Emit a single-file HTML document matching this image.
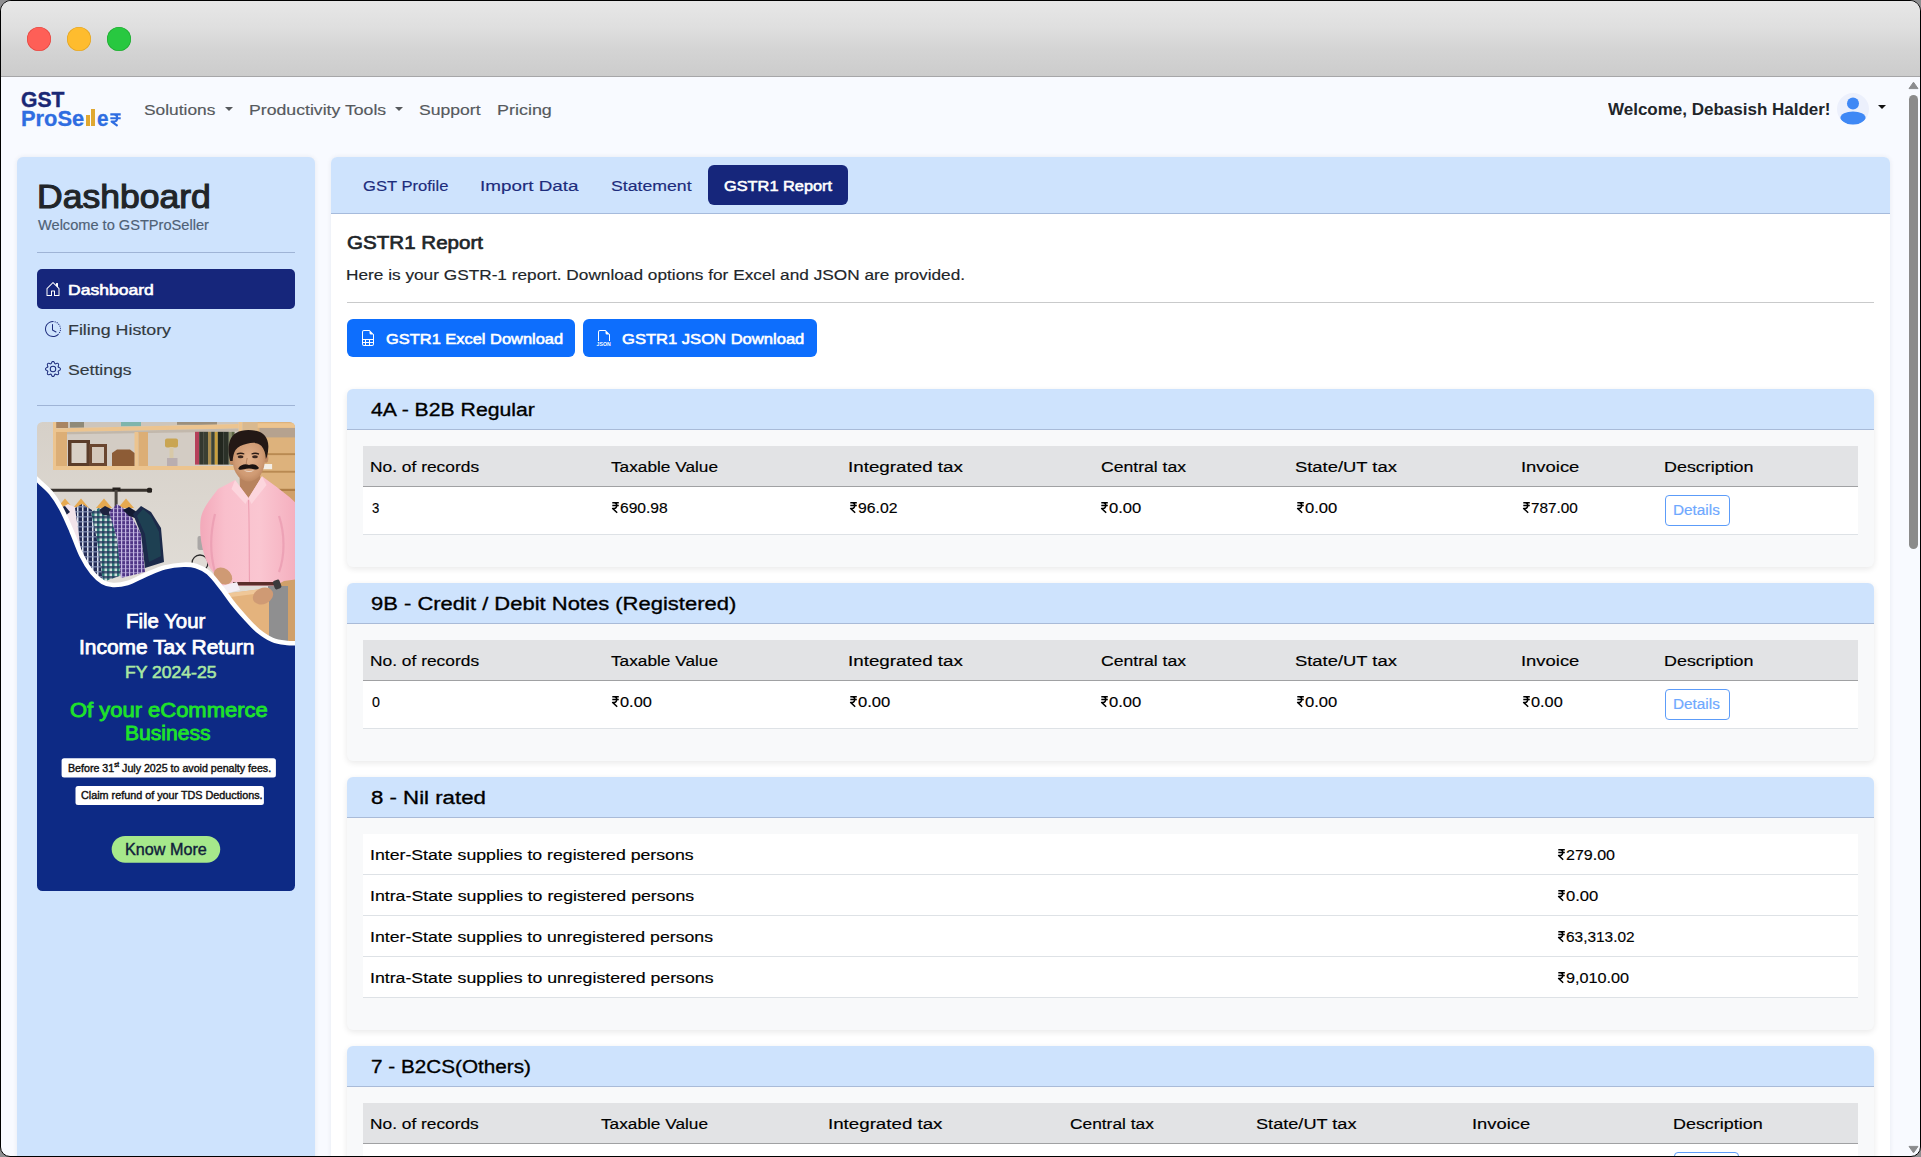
<!DOCTYPE html><html lang="en"><head><meta charset="utf-8"><title>GSTProSeller - GSTR1 Report</title><style>
*{box-sizing:border-box;margin:0;padding:0}
html,body{width:1921px;height:1157px;overflow:hidden;background:#8e8e90;font-family:"Liberation Sans",sans-serif}
#win{position:absolute;left:0;top:0;width:1921px;height:1157px;border:1px solid #000;border-radius:11px 11px 10px 10px;overflow:hidden;background:#f8faff}
#abs{position:absolute;left:-1px;top:-1px;width:1921px;height:1157px}
#abs>*,#abs .a{position:absolute}
.t{position:absolute;white-space:nowrap;line-height:1;transform-origin:0 0;display:block}
.t sup{font-size:60%;vertical-align:top;position:relative;top:-1px;letter-spacing:0}
.rs{position:absolute;overflow:visible}
#title{left:1px;top:1px;width:1919px;height:75px;background:linear-gradient(#e7e7e7,#dfdfdf 35%,#d4d4d4 65%,#cccccc)}
#tline{left:1px;top:76px;width:1919px;height:1px;background:#a6a6a8}
.dot{width:24px;height:24px;border-radius:50%;top:27px}
#side{left:17px;top:157px;width:298px;height:1010px;background:#cee3fd;border-radius:6px;box-shadow:0 0 5px rgba(30,40,80,.08)}
#main{left:331px;top:157px;width:1559px;height:1010px;background:#fff;border-radius:6px;box-shadow:0 0 5px rgba(30,40,80,.08)}
#tabs{left:331px;top:157px;width:1559px;height:56px;background:#cee3fd;border-radius:6px 6px 0 0}
#tabline{left:331px;top:213px;width:1559px;height:1px;background:#a6bbdc}
.hr{height:1px}
.navact{background:#16267b;border-radius:5px}
.btn{background:#0d6efd;border-radius:6px;height:38px;top:319px}
.sec{left:347px;width:1527px;background:#f8f9fa;border-radius:6px;box-shadow:0 2px 6px rgba(0,0,0,.09)}
.sech{left:347px;width:1527px;height:40px;background:#cee3fd;border-radius:6px 6px 0 0}
.secl{left:347px;width:1527px;height:1px;background:#a9bbd8}
.th{left:363px;width:1495px;height:40px;background:#e2e3e5}
.thl{left:363px;width:1495px;height:1px;background:#a0a1a3}
.tr{left:363px;width:1495px;background:#fff}
.trl{left:363px;width:1495px;height:1px;background:#dee2e6}
.det{width:65px;height:31px;border:1px solid #5c9cf9;border-radius:4px;background:#fff}
.caret{position:absolute;width:0;height:0;border-left:4.4px solid transparent;border-right:4.4px solid transparent;border-top:4.6px solid #56595d}
.ad{position:absolute}
svg.ic{position:absolute;overflow:visible}
</style></head><body>
<div id="win"><div id="abs">
<div id="title"></div><div id="tline"></div>
<div class="dot" style="left:27px;background:#fe5f57;box-shadow:inset 0 0 0 .6px #e0443e"></div>
<div class="dot" style="left:67px;background:#febc2e;box-shadow:inset 0 0 0 .6px #dea123"></div>
<div class="dot" style="left:107px;background:#28c840;box-shadow:inset 0 0 0 .6px #1fa62f"></div>
<nav>
<div class="a" style="left:85.9px;top:115.3px;width:4px;height:10.4px;background:#e0a832"></div>
<div class="a" style="left:91.2px;top:109.2px;width:4.1px;height:16.5px;background:#e0a832"></div>
<svg class="ic" style="left:110.4px;top:113.4px;width:11px;height:13.6px" viewBox="0 0 11 13.6"><path d="M0.3 1.4H10.7M0.3 5.2H10.7M0.5 1.4H3.6C8.4 1.4 8.4 8.6 3.6 8.6H1.6L7.6 12.8" fill="none" stroke="#2f6de1" stroke-width="2.1" stroke-linejoin="round"/></svg>
<div class="caret" style="left:224.8px;top:107px"></div>
<div class="caret" style="left:394.9px;top:107px"></div>
<svg class="ic" style="left:1837px;top:93px;width:32px;height:32px" viewBox="0 0 32 32"><defs><clipPath id="avc"><circle cx="16" cy="16" r="16"/></clipPath></defs><circle cx="16" cy="16" r="16" fill="#ecf0fc"/><g clip-path="url(#avc)" fill="#3f88f5"><circle cx="16" cy="10.6" r="6"/><ellipse cx="16" cy="25" rx="12.6" ry="6.6"/></g></svg>
<div class="caret" style="left:1877.6px;top:105px;border-top-color:#111"></div>
</nav>
<svg class="ic" style="left:1906px;top:78px;width:14px;height:1078px" viewBox="0 0 14 1078"><path d="M7.5 4.2 L12 10.6 H3 Z" fill="#8b8c8e" stroke="#8b8c8e" stroke-width="1" stroke-linejoin="round"/><rect x="3" y="17" width="9" height="454" rx="4.5" fill="#8b8b8b"/><path d="M7.5 1074.8 L12 1068.4 H3 Z" fill="#8b8c8e" stroke="#8b8c8e" stroke-width="1" stroke-linejoin="round"/></svg>
<aside id="side"></aside>
<div class="hr" style="left:37px;top:252px;width:258px;background:#9fb4d6"></div>
<div class="navact" style="left:37px;top:269px;width:258px;height:40px"></div>
<div class="hr" style="left:37px;top:405px;width:258px;background:#9fb4d6"></div>
<svg class="ic" style="left:45px;top:281.2px;width:16px;height:16px" viewBox="0 0 16 16" fill="#fff"><path d="M8.354 1.146a.5.5 0 0 0-.708 0l-6 6A.5.5 0 0 0 1.5 7.5v7a.5.5 0 0 0 .5.5h4.5a.5.5 0 0 0 .5-.5v-4h2v4a.5.5 0 0 0 .5.5H14a.5.5 0 0 0 .5-.5v-7a.5.5 0 0 0-.146-.354L13 5.793V2.5a.5.5 0 0 0-.5-.5h-1a.5.5 0 0 0-.5.5v1.293zM2.5 14V7.707l5.5-5.5 5.5 5.5V14H10v-4a.5.5 0 0 0-.5-.5h-3a.5.5 0 0 0-.5.5v4z"/></svg>
<svg class="ic" style="left:45px;top:321px;width:16px;height:16px" viewBox="0 0 16 16" fill="#1d2c7c"><path d="M8.515 1.019A7 7 0 0 0 8 1V0a8 8 0 0 1 .589.022zm2.004.45a7 7 0 0 0-.985-.299l.219-.976q.576.129 1.126.342zm1.37.71a7 7 0 0 0-.439-.27l.493-.87a8 8 0 0 1 .979.654l-.615.789a7 7 0 0 0-.418-.302zm1.834 1.79a7 7 0 0 0-.653-.796l.724-.69q.406.429.747.91zm.744 1.352a7 7 0 0 0-.214-.468l.893-.45a8 8 0 0 1 .45 1.088l-.95.313a7 7 0 0 0-.179-.483m.53 2.507a7 7 0 0 0-.1-1.025l.985-.17q.1.58.116 1.17zm-.131 1.538q.05-.254.081-.51l.993.123a8 8 0 0 1-.23 1.155l-.964-.267q.069-.247.12-.501m-.952 2.379q.276-.436.486-.908l.914.405q-.24.54-.555 1.038zm-.964 1.205q.183-.183.35-.378l.758.653a8 8 0 0 1-.401.432z"/><path d="M8 1a7 7 0 1 0 4.95 11.95l.707.707A8.001 8.001 0 1 1 8 0z"/><path d="M7.5 3a.5.5 0 0 1 .5.5v5.21l3.248 1.856a.5.5 0 0 1-.496.868l-3.5-2A.5.5 0 0 1 7 9V3.500a.5.5 0 0 1 .5-.5"/></svg>
<svg class="ic" style="left:45px;top:361px;width:16px;height:16px" viewBox="0 0 16 16" fill="#1d2c7c"><path d="M8 4.754a3.246 3.246 0 1 0 0 6.492 3.246 3.246 0 0 0 0-6.492M5.754 8a2.246 2.246 0 1 1 4.492 0 2.246 2.246 0 0 1-4.492 0"/><path d="M9.796 1.343c-.527-1.79-3.065-1.79-3.592 0l-.094.319a.873.873 0 0 1-1.255.52l-.292-.16c-1.64-.892-3.433.902-2.54 2.541l.159.292a.873.873 0 0 1-.52 1.255l-.319.094c-1.79.527-1.79 3.065 0 3.592l.319.094a.873.873 0 0 1 .52 1.255l-.16.292c-.892 1.64.901 3.434 2.541 2.54l.292-.159a.873.873 0 0 1 1.255.52l.094.319c.527 1.79 3.065 1.79 3.592 0l.094-.319a.873.873 0 0 1 1.255-.52l.292.16c1.64.893 3.434-.902 2.54-2.541l-.159-.292a.873.873 0 0 1 .52-1.255l.319-.094c1.79-.527 1.79-3.065 0-3.592l-.319-.094a.873.873 0 0 1-.52-1.255l.16-.292c.893-1.64-.902-3.433-2.541-2.54l-.292.159a.873.873 0 0 1-1.255-.52zm-2.633.283c.246-.835 1.428-.835 1.674 0l.094.319a1.873 1.873 0 0 0 2.693 1.115l.291-.16c.764-.415 1.6.42 1.184 1.185l-.159.292a1.873 1.873 0 0 0 1.116 2.692l.318.094c.835.246.835 1.428 0 1.674l-.319.094a1.873 1.873 0 0 0-1.115 2.693l.16.291c.415.764-.42 1.6-1.185 1.184l-.291-.159a1.873 1.873 0 0 0-2.693 1.116l-.094.318c-.246.835-1.428.835-1.674 0l-.094-.319a1.873 1.873 0 0 0-2.692-1.115l-.292.16c-.764.415-1.6-.42-1.184-1.185l.159-.291A1.873 1.873 0 0 0 1.945 8.93l-.319-.094c-.835-.246-.835-1.428 0-1.674l.319-.094A1.873 1.873 0 0 0 3.06 4.377l-.16-.292c-.415-.764.42-1.6 1.185-1.184l.292.159a1.873 1.873 0 0 0 2.692-1.115z"/></svg>
<svg class="ad" width="258" height="469" viewBox="0 0 258 469" style="left:37px;top:422px">
<defs><clipPath id="adc"><rect width="258" height="469" rx="5.5"/></clipPath><linearGradient id="wall" x1="0" y1="0" x2="0" y2="1"><stop offset="0" stop-color="#d6d0c8"/><stop offset="1" stop-color="#e6e3de"/></linearGradient><pattern id="plaid" width="5" height="5" patternUnits="userSpaceOnUse"><rect width="5" height="5" fill="#232c55"/><rect width="1.5" height="5" fill="#dfe4ee"/><rect y="0" width="5" height="1.5" fill="#8f9cc0" opacity=".7"/></pattern><pattern id="plaid2" width="4" height="4" patternUnits="userSpaceOnUse"><rect width="4" height="4" fill="#4f3586"/><rect width="1.2" height="4" fill="#c3b6e2"/><rect width="4" height="1.2" fill="#c3b6e2" opacity=".55"/></pattern><pattern id="plaid3" width="5" height="5" patternUnits="userSpaceOnUse"><rect width="5" height="5" fill="#cfe0dc"/><rect width="2.5" height="5" fill="#2f7a78"/><rect width="5" height="2.5" fill="#24335a" opacity=".75"/></pattern></defs>
<g clip-path="url(#adc)">
<rect width="258" height="240" fill="url(#wall)"/>
<path d="M19 0 H201.6 V2 L19 6.5Z" fill="#cdc5bb"/>
<rect x="19" y="0" width="12" height="6" fill="#a98562"/><rect x="33" y="0" width="14" height="5.6" fill="#8f8a78"/><rect x="84" y="0" width="20" height="4.2" fill="#7fb5ac"/><rect x="140" y="0" width="40" height="2.8" fill="#9c8f7c"/>
<rect x="19" y="10" width="180" height="34" fill="#d3ccc4"/>
<rect x="16" y="0" width="3.2" height="48" fill="#ecc48f"/>
<path d="M16 6.5 L201.6 2 V6.6 L16 10.3Z" fill="#ecc48f"/>
<path d="M19 10.3 L201.6 6.6 V9.6 L19 12.4Z" fill="#b9ae9f" opacity=".7"/>
<rect x="16" y="44" width="182" height="4" fill="#ecc48f"/>
<rect x="97.5" y="10" width="4" height="34" fill="#ecc48f"/><rect x="101.5" y="10" width="9.5" height="34" fill="#dcae76"/>
<rect x="19" y="10" width="11" height="34" fill="#dcae76"/>
<rect x="31" y="18" width="22" height="26" fill="#5b3c29"/><rect x="34.5" y="21" width="15" height="20" fill="#d9d0c6"/>
<rect x="52" y="22" width="18" height="22" fill="#6a4630"/><rect x="55" y="25" width="12" height="16" fill="#d4c8bb"/>
<path d="M75 31 L80 27.5 H93 L97.5 31 V44 H75Z" fill="#8d5c36"/>
<rect x="128" y="16.5" width="13" height="9" rx="2" fill="#c9a553"/><rect x="132.5" y="25" width="4" height="12" fill="#d8c9a8"/><rect x="130" y="36" width="10.5" height="8" fill="#b9aeb0"/>
<rect x="158.0" y="9.8" width="4.2" height="32.8" fill="#b5405a"/>
<rect x="162.2" y="9.8" width="4.6" height="32.8" fill="#33382f"/>
<rect x="166.8" y="9.8" width="4.2" height="32.8" fill="#3a3f33"/>
<rect x="171.0" y="9.8" width="3.2" height="32.8" fill="#a98d50"/>
<rect x="174.2" y="9.8" width="3.6" height="32.8" fill="#3d4437"/>
<rect x="177.8" y="9.8" width="3" height="32.8" fill="#c9a03c"/>
<rect x="180.8" y="9.8" width="5.4" height="32.8" fill="#22271f"/>
<rect x="186.2" y="9.8" width="5.6" height="32.8" fill="#2b3128"/>
<rect x="191.8" y="9.8" width="2.6" height="32.8" fill="#8a8f6a"/>
<rect x="194.4" y="9.8" width="3.2" height="32.8" fill="#5c6544"/>
<rect x="201.6" y="0" width="3.8" height="12" fill="#ecc48f"/><rect x="205.4" y="0" width="15.5" height="13" fill="#d9b98f"/>
<rect x="220.6" y="0" width="40" height="80" fill="#ddb27c"/>
<rect x="220.6" y="1.2" width="40" height="4.6" fill="#ecc48f"/><rect x="222.5" y="6" width="37" height="9.4" fill="#b5a28f"/>
<rect x="220.6" y="31.2" width="40" height="1.9" fill="#b98a52"/><rect x="220.6" y="48.8" width="40" height="1.9" fill="#b98a52"/><rect x="220.6" y="66.8" width="40" height="2.2" fill="#b07f47"/>
<rect x="225.6" y="42" width="9.5" height="5.2" fill="#f3eee6"/>
<rect x="240" y="69" width="21" height="160" fill="#d0a06a"/>
<rect x="128" y="146" width="40" height="10" fill="#d9b88e"/>
<rect x="160.5" y="114" width="7" height="14" rx="2" fill="#aaa7a6"/><circle cx="163" cy="141" r="8" fill="none" stroke="#2a2a2a" stroke-width="1.3"/>
<rect x="12.5" y="66.8" width="101.5" height="2.9" rx="1" fill="#3a342f"/><rect x="110" y="65.8" width="5" height="5" rx="1.5" fill="#26221f"/>
<rect x="75.5" y="65.5" width="8" height="3.6" fill="#26221f"/><rect x="77.6" y="68" width="3" height="80" fill="#4a4540"/>
<g transform="translate(0,-6)">
<path d="M20 92 L28 82.6 L36 92Z" fill="#e6a950"/>
<path d="M36 92 L44 82.6 L52 92Z" fill="#e6a950"/>
<path d="M59 92 L67 82.6 L75 92Z" fill="#e6a950"/>
<path d="M81 92 L89 82.6 L97 92Z" fill="#e6a950"/>
<path d="M24 92 L31 88 L42 93 L52 118 L58 160 L30 170 L20 120Z" fill="#f1e3ea"/>
<path d="M22 92 L28 90 L33 96 L28 100 L22 98Z" fill="#1b2447"/>
<path d="M38 92 L45 88 L55 94 L66 118 L72 160 L48 168 L42 120Z" fill="url(#plaid)"/>
<path d="M54 96 L62 92 L74 100 L84 124 L88 158 L66 166 L60 124Z" fill="url(#plaid3)"/>
<path d="M62 94 L68 90 L78 95 L74 100 L66 99Z" fill="#1d2340"/>
<path d="M72 96 L80 88 L92 96 L104 118 L108 156 L84 162 L80 122Z" fill="url(#plaid2)"/>
<path d="M86 94 L92 91 L100 96 L104 104 L92 100Z" fill="#141a33"/>
<path d="M96 98 L104 90 L114 96 L124 112 L127 146 L108 152 L104 118Z" fill="#1c2a4a"/>
<path d="M100 100 L106 93 L114 100 L122 116 L124 140 L112 146 L108 118Z" fill="#1f4a55" opacity=".7"/>
</g>
<defs><linearGradient id="shirt" x1="0" y1="0" x2="1" y2="0"><stop offset="0" stop-color="#f3a9ba"/><stop offset=".25" stop-color="#f9bfcc"/><stop offset=".6" stop-color="#fac6d1"/><stop offset="1" stop-color="#f4adbd"/></linearGradient><radialGradient id="face" cx=".5" cy=".45" r=".6"><stop offset="0" stop-color="#e2b18b"/><stop offset=".7" stop-color="#cf9a73"/><stop offset="1" stop-color="#b9835d"/></radialGradient></defs>
<path d="M202.5 52 L223.3 50 L222.5 70 L211.5 78 L203 68Z" fill="#b8835e"/>
<path d="M163.4 100 C164 90 168 84 181 67 L198 58 L211.5 76 L225 54.3 L239.7 65 L252.4 75 L262 84 V157 L247 159 L238 164 L182 164 L176 150 C168 140 162 120 163.4 100Z" fill="url(#shirt)"/>
<path d="M198 58 L194.5 67 L208.5 82 L211.5 76Z" fill="#fcd5dd"/><path d="M225 54.3 L229.5 63 L214.5 82 L211.5 76Z" fill="#fcd5dd"/>
<path d="M211.5 78 C212.5 100 212 130 212.5 162" stroke="#ec9fb2" stroke-width="1.1" fill="none"/>
<path d="M178 92 C173 112 173 132 178 150" stroke="#ea9bb0" stroke-width="2.2" fill="none" opacity=".75"/>
<path d="M242 94 C248 112 248 134 242 150" stroke="#ea9bb0" stroke-width="2.2" fill="none" opacity=".75"/>
<ellipse cx="194.8" cy="38.5" rx="2.3" ry="4.2" fill="#c08a63"/><ellipse cx="229" cy="36.5" rx="2.3" ry="4.2" fill="#c08a63"/>
<path d="M195.7 34 C195 44 198 52 203 56 C207 59 210 59.6 212.5 59.6 C216 59.4 220 57 223.5 53 C227 48 228.5 40 227.9 32 C227 22 220 17 212 17 C203 17 196.5 24 195.7 34Z" fill="url(#face)"/>
<path d="M193.2 39 C190.3 28 190.8 16 199 11 C205 7.4 213 7.6 219 8.8 C227 10.4 232.4 17 231.2 27 C231 31 230.2 34.5 228.9 37 C228.6 31 227 27 224.5 24 C221 20.5 216 20.2 210 21.8 C205 23.2 201 24.6 198.5 28 C196.5 31 196 35 195.6 39 Z" fill="#231815"/>
<path d="M199.6 31.6 Q203.5 29.6 207.4 31.4 L207.2 32.6 Q203.5 31.2 199.9 32.8Z" fill="#2a1b15"/><path d="M214.4 31.4 Q218.4 29.6 222.2 31.6 L221.9 32.8 Q218.4 31.2 214.6 32.6Z" fill="#2a1b15"/>
<ellipse cx="203.6" cy="34.8" rx="2.9" ry="1.5" fill="#3a261e"/><ellipse cx="218" cy="34.8" rx="2.9" ry="1.5" fill="#3a261e"/>
<path d="M210.2 36 C209.6 39 209 41 209.4 42" stroke="#b07d58" stroke-width=".9" fill="none"/>
<path d="M201.4 46.3 C204 42 209 41.8 212 43 C215 41.8 219.6 42 221.7 45.6 C222.2 47.2 220 47.8 217 47.2 C214 46.4 210 46.4 207 47.2 C204 48 201.2 47.8 201.4 46.3Z" fill="#1c1310"/>
<path d="M206.5 48.2 Q212 51.4 217.5 48.2 Q212 49.6 206.5 48.2Z" fill="#f3e9e2"/>
<rect x="196" y="160" width="42" height="3.5" fill="#5a2e2a"/>
<rect x="231" y="164" width="20" height="60" fill="#8f8f90"/>
<path d="M186 172 L232 166 V224 H186Z" fill="#e4b37d"/>
<path d="M186 172 L232 166 L232 170 L186 176Z" fill="#efc798"/>
<path d="M184 164 L200 160 L203 168 L187 172Z" fill="#f4eef5"/>
<ellipse cx="186" cy="154" rx="10" ry="7.5" transform="rotate(35 186 154)" fill="#cf9a74"/>
<ellipse cx="226" cy="174" rx="10.5" ry="8" transform="rotate(-25 226 174)" fill="#cf9a74"/>
<rect x="236.5" y="158" width="7" height="9" rx="2" transform="rotate(-20 240 162)" fill="#3a3a3c"/>
<path d="M-2.0 55.5C-1.7 55.8 -2.6 55.0 0.0 57.5C2.6 60.0 9.7 65.7 13.7 70.5C17.7 75.3 20.6 79.9 24.1 86.3C27.6 92.7 31.1 101.0 34.5 109.0C38.0 117.0 41.3 127.1 44.8 134.0C48.2 140.9 51.7 146.3 55.2 150.6C58.7 154.9 62.1 157.9 65.6 160.0C69.1 162.1 71.8 162.8 76.0 163.0C80.2 163.2 85.0 162.7 90.5 161.0C96.0 159.3 102.8 155.3 109.0 152.7C115.2 150.1 121.5 147.1 127.8 145.4C134.1 143.7 141.3 142.9 146.5 142.7C151.7 142.5 154.9 142.7 159.0 144.0C163.1 145.3 167.2 147.1 171.3 150.6C175.4 154.1 179.7 159.8 183.8 165.0C188.0 170.2 192.0 176.5 196.2 181.7C200.3 186.9 204.6 191.7 208.7 196.2C212.8 200.7 216.5 205.1 221.0 208.7C225.5 212.3 230.8 215.9 235.6 218.0C240.4 220.1 245.9 220.5 250.0 221.0C254.1 221.5 258.3 221.2 260.0 221.2 V470 H-2Z" fill="#0d2a85"/>
<path d="M-2.0 55.5C-1.7 55.8 -2.6 55.0 0.0 57.5C2.6 60.0 9.7 65.7 13.7 70.5C17.7 75.3 20.6 79.9 24.1 86.3C27.6 92.7 31.1 101.0 34.5 109.0C38.0 117.0 41.3 127.1 44.8 134.0C48.2 140.9 51.7 146.3 55.2 150.6C58.7 154.9 62.1 157.9 65.6 160.0C69.1 162.1 71.8 162.8 76.0 163.0C80.2 163.2 85.0 162.7 90.5 161.0C96.0 159.3 102.8 155.3 109.0 152.7C115.2 150.1 121.5 147.1 127.8 145.4C134.1 143.7 141.3 142.9 146.5 142.7C151.7 142.5 154.9 142.7 159.0 144.0C163.1 145.3 167.2 147.1 171.3 150.6C175.4 154.1 179.7 159.8 183.8 165.0C188.0 170.2 192.0 176.5 196.2 181.7C200.3 186.9 204.6 191.7 208.7 196.2C212.8 200.7 216.5 205.1 221.0 208.7C225.5 212.3 230.8 215.9 235.6 218.0C240.4 220.1 245.9 220.5 250.0 221.0C254.1 221.5 258.3 221.2 260.0 221.2" fill="none" stroke="#fff" stroke-width="4.6"/>
<rect x="24.6" y="336.2" width="214.3" height="19.3" rx="2.5" fill="#fff"/>
<rect x="38.5" y="364.1" width="188.4" height="19" rx="2.5" fill="#fff"/>
<rect x="74.7" y="413.9" width="108.5" height="26.8" rx="13.4" fill="#a6e88b"/>
</g></svg>
<main id="main"></main><div id="tabs"></div><div id="tabline"></div>
<div class="navact" style="left:708px;top:165px;width:140px;height:40px;border-radius:6px"></div>
<div class="hr" style="left:347px;top:302px;width:1527px;background:#c9cacb"></div>
<div class="btn" style="left:347px;width:228px"></div><div class="btn" style="left:583px;width:234px"></div>
<svg class="ic" style="left:359.7px;top:329.7px;width:16px;height:16px" viewBox="0 0 16 16" fill="#fff"><path d="M14 14V4.5L9.5 0H4a2 2 0 0 0-2 2v12a2 2 0 0 0 2 2h8a2 2 0 0 0 2-2M9.5 3A1.500 1.500 0 0 0 11 4.500h2V9H3V2a1 1 0 0 1 1-1h5.500zM3 12v-2h2v2zm0 1h2v2H4a1 1 0 0 1-1-1zm3 2v-2h3v2zm4 0v-2h3v1a1 1 0 0 1-1 1zm3-3h-3v-2h3zm-7 0v-2h3v2z"/></svg>
<svg class="ic" style="left:596.2px;top:329.7px;width:16px;height:16px" viewBox="0 0 16 16" fill="#fff"><path fill-rule="evenodd" d="M14 4.500V11h-1V4.500h-2A1.500 1.500 0 0 1 9.500 3V1H4a1 1 0 0 0-1 1v9H2V2a2 2 0 0 1 2-2h5.500z"/><text x="0.6" y="15.9" font-family="Liberation Sans" font-weight="700" font-size="5.1" textLength="14" lengthAdjust="spacingAndGlyphs">JSON</text></svg>
<section class="sec" style="top:389px;height:178px"></section>
<div class="sech" style="top:389px"></div><div class="secl" style="top:429px"></div>
<div class="th" style="top:446px"></div><div class="thl" style="top:486px"></div>
<div class="tr" style="top:487px;height:47px"></div><div class="trl" style="top:534px"></div>
<div class="det" style="left:1665px;top:495px"></div>
<section class="sec" style="top:583px;height:178px"></section>
<div class="sech" style="top:583px"></div><div class="secl" style="top:623px"></div>
<div class="th" style="top:640px"></div><div class="thl" style="top:680px"></div>
<div class="tr" style="top:681px;height:47px"></div><div class="trl" style="top:728px"></div>
<div class="det" style="left:1665px;top:689px"></div>
<section class="sec" style="top:777px;height:253px"></section>
<div class="sech" style="top:777px"></div><div class="secl" style="top:817px"></div>
<div class="tr" style="top:834px;height:164px"></div>
<div class="trl" style="top:874px"></div>
<div class="trl" style="top:915px"></div>
<div class="trl" style="top:956px"></div>
<div class="trl" style="top:997px"></div>
<section class="sec" style="top:1046px;height:178px"></section>
<div class="sech" style="top:1046px"></div><div class="secl" style="top:1086px"></div>
<div class="th" style="top:1103px"></div><div class="thl" style="top:1143px"></div>
<div class="tr" style="top:1144px;height:47px"></div><div class="trl" style="top:1191px"></div>
<div class="det" style="left:1674px;top:1152px"></div>
<svg class="rs" style="left:612.10px;top:501.80px;width:7px;height:11px" viewBox="0 0 7 11"><path d="M0.3 0.7H6.8M0.3 3.6H6.8M0.3 0.7H2.2C5.6 0.7 5.6 6.4 2.2 6.4H0.6L5.2 10.7" fill="none" stroke="#000" stroke-width="1.5" stroke-linejoin="round"/></svg>
<svg class="rs" style="left:849.80px;top:501.80px;width:7px;height:11px" viewBox="0 0 7 11"><path d="M0.3 0.7H6.8M0.3 3.6H6.8M0.3 0.7H2.2C5.6 0.7 5.6 6.4 2.2 6.4H0.6L5.2 10.7" fill="none" stroke="#000" stroke-width="1.5" stroke-linejoin="round"/></svg>
<svg class="rs" style="left:1100.90px;top:501.80px;width:7px;height:11px" viewBox="0 0 7 11"><path d="M0.3 0.7H6.8M0.3 3.6H6.8M0.3 0.7H2.2C5.6 0.7 5.6 6.4 2.2 6.4H0.6L5.2 10.7" fill="none" stroke="#000" stroke-width="1.5" stroke-linejoin="round"/></svg>
<svg class="rs" style="left:1296.80px;top:501.80px;width:7px;height:11px" viewBox="0 0 7 11"><path d="M0.3 0.7H6.8M0.3 3.6H6.8M0.3 0.7H2.2C5.6 0.7 5.6 6.4 2.2 6.4H0.6L5.2 10.7" fill="none" stroke="#000" stroke-width="1.5" stroke-linejoin="round"/></svg>
<svg class="rs" style="left:1523.20px;top:501.80px;width:7px;height:11px" viewBox="0 0 7 11"><path d="M0.3 0.7H6.8M0.3 3.6H6.8M0.3 0.7H2.2C5.6 0.7 5.6 6.4 2.2 6.4H0.6L5.2 10.7" fill="none" stroke="#000" stroke-width="1.5" stroke-linejoin="round"/></svg>
<svg class="rs" style="left:612.10px;top:695.80px;width:7px;height:11px" viewBox="0 0 7 11"><path d="M0.3 0.7H6.8M0.3 3.6H6.8M0.3 0.7H2.2C5.6 0.7 5.6 6.4 2.2 6.4H0.6L5.2 10.7" fill="none" stroke="#000" stroke-width="1.5" stroke-linejoin="round"/></svg>
<svg class="rs" style="left:849.80px;top:695.80px;width:7px;height:11px" viewBox="0 0 7 11"><path d="M0.3 0.7H6.8M0.3 3.6H6.8M0.3 0.7H2.2C5.6 0.7 5.6 6.4 2.2 6.4H0.6L5.2 10.7" fill="none" stroke="#000" stroke-width="1.5" stroke-linejoin="round"/></svg>
<svg class="rs" style="left:1100.90px;top:695.80px;width:7px;height:11px" viewBox="0 0 7 11"><path d="M0.3 0.7H6.8M0.3 3.6H6.8M0.3 0.7H2.2C5.6 0.7 5.6 6.4 2.2 6.4H0.6L5.2 10.7" fill="none" stroke="#000" stroke-width="1.5" stroke-linejoin="round"/></svg>
<svg class="rs" style="left:1296.80px;top:695.80px;width:7px;height:11px" viewBox="0 0 7 11"><path d="M0.3 0.7H6.8M0.3 3.6H6.8M0.3 0.7H2.2C5.6 0.7 5.6 6.4 2.2 6.4H0.6L5.2 10.7" fill="none" stroke="#000" stroke-width="1.5" stroke-linejoin="round"/></svg>
<svg class="rs" style="left:1523.20px;top:695.80px;width:7px;height:11px" viewBox="0 0 7 11"><path d="M0.3 0.7H6.8M0.3 3.6H6.8M0.3 0.7H2.2C5.6 0.7 5.6 6.4 2.2 6.4H0.6L5.2 10.7" fill="none" stroke="#000" stroke-width="1.5" stroke-linejoin="round"/></svg>
<svg class="rs" style="left:1558.30px;top:849.00px;width:7px;height:11px" viewBox="0 0 7 11"><path d="M0.3 0.7H6.8M0.3 3.6H6.8M0.3 0.7H2.2C5.6 0.7 5.6 6.4 2.2 6.4H0.6L5.2 10.7" fill="none" stroke="#000" stroke-width="1.5" stroke-linejoin="round"/></svg>
<svg class="rs" style="left:1558.30px;top:890.00px;width:7px;height:11px" viewBox="0 0 7 11"><path d="M0.3 0.7H6.8M0.3 3.6H6.8M0.3 0.7H2.2C5.6 0.7 5.6 6.4 2.2 6.4H0.6L5.2 10.7" fill="none" stroke="#000" stroke-width="1.5" stroke-linejoin="round"/></svg>
<svg class="rs" style="left:1558.30px;top:931.00px;width:7px;height:11px" viewBox="0 0 7 11"><path d="M0.3 0.7H6.8M0.3 3.6H6.8M0.3 0.7H2.2C5.6 0.7 5.6 6.4 2.2 6.4H0.6L5.2 10.7" fill="none" stroke="#000" stroke-width="1.5" stroke-linejoin="round"/></svg>
<svg class="rs" style="left:1558.30px;top:972.00px;width:7px;height:11px" viewBox="0 0 7 11"><path d="M0.3 0.7H6.8M0.3 3.6H6.8M0.3 0.7H2.2C5.6 0.7 5.6 6.4 2.2 6.4H0.6L5.2 10.7" fill="none" stroke="#000" stroke-width="1.5" stroke-linejoin="round"/></svg>
<span class="t" style="left:144.48px;top:102px;font-size:16px;color:#56595d;transform-origin:0 13px;transform:scale(1.0842,0.92);-webkit-text-stroke:0.17px #56595d;">Solutions</span>
<span class="t" style="left:248.50px;top:102px;font-size:16px;color:#56595d;transform-origin:0 13px;transform:scale(1.1045,0.92);-webkit-text-stroke:0.17px #56595d;">Productivity Tools</span>
<span class="t" style="left:418.66px;top:102px;font-size:16px;color:#56595d;transform-origin:0 13px;transform:scale(1.0987,0.92);-webkit-text-stroke:0.17px #56595d;">Support</span>
<span class="t" style="left:497.18px;top:102px;font-size:16px;color:#56595d;transform-origin:0 13px;transform:scale(1.1211,0.92);-webkit-text-stroke:0.17px #56595d;">Pricing</span>
<span class="t" style="left:1608.10px;top:102px;font-size:16px;color:#212529;transform:scaleX(1.0618);font-weight:700;">Welcome, Debasish Halder!</span>
<span class="t" style="left:37.45px;top:180px;font-size:33px;color:#212529;transform:scaleX(1.0760);-webkit-text-stroke:1.1px #212529;">Dashboard</span>
<span class="t" style="left:37.80px;top:218px;font-size:14px;color:#4f6176;transform:scaleX(1.0424);-webkit-text-stroke:0.17px #4f6176;">Welcome to GSTProSeller</span>
<span class="t" style="left:68.49px;top:282px;font-size:16px;color:#fff;transform-origin:0 13px;transform:scale(1.0956,0.92);-webkit-text-stroke:0.65px #fff;">Dashboard</span>
<span class="t" style="left:68.49px;top:322px;font-size:16px;color:#333a40;transform-origin:0 13px;transform:scale(1.1141,0.92);-webkit-text-stroke:0.17px #333a40;">Filing History</span>
<span class="t" style="left:68.48px;top:362px;font-size:16px;color:#333a40;transform-origin:0 13px;transform:scale(1.0992,0.92);-webkit-text-stroke:0.17px #333a40;">Settings</span>
<span class="t" style="left:363.10px;top:178px;font-size:16px;color:#1d2c7c;transform-origin:0 13px;transform:scale(1.0365,0.92);-webkit-text-stroke:0.17px #1d2c7c;">GST Profile</span>
<span class="t" style="left:479.82px;top:178px;font-size:16px;color:#1d2c7c;transform-origin:0 13px;transform:scale(1.1779,0.92);-webkit-text-stroke:0.17px #1d2c7c;">Import Data</span>
<span class="t" style="left:611.30px;top:178px;font-size:16px;color:#1d2c7c;transform-origin:0 13px;transform:scale(1.1047,0.92);-webkit-text-stroke:0.17px #1d2c7c;">Statement</span>
<span class="t" style="left:723.80px;top:178px;font-size:16px;color:#fff;transform-origin:0 13px;transform:scale(1.0210,0.92);-webkit-text-stroke:0.6px #fff;">GSTR1 Report</span>
<span class="t" style="left:347.30px;top:232px;font-size:20px;color:#212529;transform-origin:0 17px;transform:scale(1.0287,0.96);-webkit-text-stroke:0.7px #212529;">GSTR1 Report</span>
<span class="t" style="left:346.32px;top:267px;font-size:16px;color:#212529;transform-origin:0 13px;transform:scale(1.0776,0.92);-webkit-text-stroke:0.17px #212529;">Here is your GSTR-1 report. Download options for Excel and JSON are provided.</span>
<span class="t" style="left:385.50px;top:331px;font-size:16px;color:#fff;transform-origin:0 13px;transform:scale(1.0267,0.92);-webkit-text-stroke:0.6px #fff;">GSTR1 Excel Download</span>
<span class="t" style="left:621.90px;top:331px;font-size:16px;color:#fff;transform-origin:0 13px;transform:scale(1.0355,0.92);-webkit-text-stroke:0.6px #fff;">GSTR1 JSON Download</span>
<span class="t" style="left:371.30px;top:399px;font-size:20px;color:#000;transform-origin:0 17px;transform:scale(1.0601,0.96);-webkit-text-stroke:0.35px #000;">4A - B2B Regular</span>
<span class="t" style="left:371.30px;top:593px;font-size:20px;color:#000;transform-origin:0 17px;transform:scale(1.0989,0.96);-webkit-text-stroke:0.35px #000;">9B - Credit / Debit Notes (Registered)</span>
<span class="t" style="left:371.40px;top:787px;font-size:20px;color:#000;transform-origin:0 17px;transform:scale(1.1110,0.96);-webkit-text-stroke:0.35px #000;">8 - Nil rated</span>
<span class="t" style="left:371.12px;top:1056px;font-size:20px;color:#000;transform-origin:0 17px;transform:scale(1.0358,0.96);-webkit-text-stroke:0.35px #000;">7 - B2CS(Others)</span>
<span class="t" style="left:370.21px;top:459px;font-size:16px;color:#000;transform-origin:0 13px;transform:scale(1.0856,0.92);-webkit-text-stroke:0.17px #000;">No. of records</span>
<span class="t" style="left:611.10px;top:459px;font-size:16px;color:#000;transform-origin:0 13px;transform:scale(1.0771,0.92);-webkit-text-stroke:0.17px #000;">Taxable Value</span>
<span class="t" style="left:848.23px;top:459px;font-size:16px;color:#000;transform-origin:0 13px;transform:scale(1.1741,0.92);-webkit-text-stroke:0.17px #000;">Integrated tax</span>
<span class="t" style="left:1100.50px;top:459px;font-size:16px;color:#000;transform-origin:0 13px;transform:scale(1.0999,0.92);-webkit-text-stroke:0.17px #000;">Central tax</span>
<span class="t" style="left:1295.02px;top:459px;font-size:16px;color:#000;transform-origin:0 13px;transform:scale(1.1490,0.92);-webkit-text-stroke:0.17px #000;">State/UT tax</span>
<span class="t" style="left:1521.35px;top:459px;font-size:16px;color:#000;transform-origin:0 13px;transform:scale(1.1507,0.92);-webkit-text-stroke:0.17px #000;">Invoice</span>
<span class="t" style="left:1664.48px;top:459px;font-size:16px;color:#000;transform-origin:0 13px;transform:scale(1.1186,0.92);-webkit-text-stroke:0.17px #000;">Description</span>
<span class="t" style="left:370.21px;top:653px;font-size:16px;color:#000;transform-origin:0 13px;transform:scale(1.0856,0.92);-webkit-text-stroke:0.17px #000;">No. of records</span>
<span class="t" style="left:611.10px;top:653px;font-size:16px;color:#000;transform-origin:0 13px;transform:scale(1.0771,0.92);-webkit-text-stroke:0.17px #000;">Taxable Value</span>
<span class="t" style="left:848.23px;top:653px;font-size:16px;color:#000;transform-origin:0 13px;transform:scale(1.1741,0.92);-webkit-text-stroke:0.17px #000;">Integrated tax</span>
<span class="t" style="left:1100.50px;top:653px;font-size:16px;color:#000;transform-origin:0 13px;transform:scale(1.0999,0.92);-webkit-text-stroke:0.17px #000;">Central tax</span>
<span class="t" style="left:1295.02px;top:653px;font-size:16px;color:#000;transform-origin:0 13px;transform:scale(1.1490,0.92);-webkit-text-stroke:0.17px #000;">State/UT tax</span>
<span class="t" style="left:1521.35px;top:653px;font-size:16px;color:#000;transform-origin:0 13px;transform:scale(1.1507,0.92);-webkit-text-stroke:0.17px #000;">Invoice</span>
<span class="t" style="left:1664.48px;top:653px;font-size:16px;color:#000;transform-origin:0 13px;transform:scale(1.1186,0.92);-webkit-text-stroke:0.17px #000;">Description</span>
<span class="t" style="left:370.12px;top:1116px;font-size:16px;color:#000;transform-origin:0 13px;transform:scale(1.0826,0.92);-webkit-text-stroke:0.17px #000;">No. of records</span>
<span class="t" style="left:601.10px;top:1116px;font-size:16px;color:#000;transform-origin:0 13px;transform:scale(1.0771,0.92);-webkit-text-stroke:0.17px #000;">Taxable Value</span>
<span class="t" style="left:828.23px;top:1116px;font-size:16px;color:#000;transform-origin:0 13px;transform:scale(1.1699,0.92);-webkit-text-stroke:0.17px #000;">Integrated tax</span>
<span class="t" style="left:1069.70px;top:1116px;font-size:16px;color:#000;transform-origin:0 13px;transform:scale(1.0831,0.92);-webkit-text-stroke:0.17px #000;">Central tax</span>
<span class="t" style="left:1255.92px;top:1116px;font-size:16px;color:#000;transform-origin:0 13px;transform:scale(1.1337,0.92);-webkit-text-stroke:0.17px #000;">State/UT tax</span>
<span class="t" style="left:1471.75px;top:1116px;font-size:16px;color:#000;transform-origin:0 13px;transform:scale(1.1467,0.92);-webkit-text-stroke:0.17px #000;">Invoice</span>
<span class="t" style="left:1672.98px;top:1116px;font-size:16px;color:#000;transform-origin:0 13px;transform:scale(1.1199,0.92);-webkit-text-stroke:0.17px #000;">Description</span>
<span class="t" style="left:371.60px;top:500px;font-size:16px;color:#000;transform-origin:0 13px;transform:scale(0.8222,0.92);-webkit-text-stroke:0.17px #000;">3</span>
<span class="t" style="left:620.10px;top:500px;font-size:16px;color:#000;transform-origin:0 13px;transform:scale(0.9747,0.92);-webkit-text-stroke:0.17px #000;">690.98</span>
<span class="t" style="left:857.80px;top:500px;font-size:16px;color:#000;transform-origin:0 13px;transform:scale(0.9840,0.92);-webkit-text-stroke:0.17px #000;">96.02</span>
<span class="t" style="left:1108.90px;top:500px;font-size:16px;color:#000;transform-origin:0 13px;transform:scale(1.0371,0.92);-webkit-text-stroke:0.17px #000;">0.00</span>
<span class="t" style="left:1304.80px;top:500px;font-size:16px;color:#000;transform-origin:0 13px;transform:scale(1.0371,0.92);-webkit-text-stroke:0.17px #000;">0.00</span>
<span class="t" style="left:1531.20px;top:500px;font-size:16px;color:#000;transform-origin:0 13px;transform:scale(0.9584,0.92);-webkit-text-stroke:0.17px #000;">787.00</span>
<span class="t" style="left:1673.41px;top:503px;font-size:14px;color:#6ea8fe;transform:scaleX(1.0935);-webkit-text-stroke:0.17px #6ea8fe;">Details</span>
<span class="t" style="left:371.60px;top:694px;font-size:16px;color:#000;transform-origin:0 13px;transform:scale(0.8889,0.92);-webkit-text-stroke:0.17px #000;">0</span>
<span class="t" style="left:620.10px;top:694px;font-size:16px;color:#000;transform-origin:0 13px;transform:scale(1.0211,0.92);-webkit-text-stroke:0.17px #000;">0.00</span>
<span class="t" style="left:857.80px;top:694px;font-size:16px;color:#000;transform-origin:0 13px;transform:scale(1.0371,0.92);-webkit-text-stroke:0.17px #000;">0.00</span>
<span class="t" style="left:1108.90px;top:694px;font-size:16px;color:#000;transform-origin:0 13px;transform:scale(1.0371,0.92);-webkit-text-stroke:0.17px #000;">0.00</span>
<span class="t" style="left:1304.80px;top:694px;font-size:16px;color:#000;transform-origin:0 13px;transform:scale(1.0371,0.92);-webkit-text-stroke:0.17px #000;">0.00</span>
<span class="t" style="left:1531.20px;top:694px;font-size:16px;color:#000;transform-origin:0 13px;transform:scale(1.0179,0.92);-webkit-text-stroke:0.17px #000;">0.00</span>
<span class="t" style="left:1673.41px;top:697px;font-size:14px;color:#6ea8fe;transform:scaleX(1.0935);-webkit-text-stroke:0.17px #6ea8fe;">Details</span>
<span class="t" style="left:370.29px;top:847px;font-size:16px;color:#000;transform-origin:0 13px;transform:scale(1.1060,0.92);-webkit-text-stroke:0.17px #000;">Inter-State supplies to registered persons</span>
<span class="t" style="left:370.29px;top:888px;font-size:16px;color:#000;transform-origin:0 13px;transform:scale(1.1080,0.92);-webkit-text-stroke:0.17px #000;">Intra-State supplies to registered persons</span>
<span class="t" style="left:370.29px;top:929px;font-size:16px;color:#000;transform-origin:0 13px;transform:scale(1.1050,0.92);-webkit-text-stroke:0.17px #000;">Inter-State supplies to unregistered persons</span>
<span class="t" style="left:370.29px;top:970px;font-size:16px;color:#000;transform-origin:0 13px;transform:scale(1.1067,0.92);-webkit-text-stroke:0.17px #000;">Intra-State supplies to unregistered persons</span>
<span class="t" style="left:1566.30px;top:847px;font-size:16px;color:#000;transform-origin:0 13px;transform:scale(1.0012,0.92);-webkit-text-stroke:0.17px #000;">279.00</span>
<span class="t" style="left:1566.30px;top:888px;font-size:16px;color:#000;transform-origin:0 13px;transform:scale(1.0371,0.92);-webkit-text-stroke:0.17px #000;">0.00</span>
<span class="t" style="left:1566.30px;top:929px;font-size:16px;color:#000;transform-origin:0 13px;transform:scale(0.9638,0.92);-webkit-text-stroke:0.17px #000;">63,313.02</span>
<span class="t" style="left:1566.30px;top:970px;font-size:16px;color:#000;transform-origin:0 13px;transform:scale(1.0131,0.92);-webkit-text-stroke:0.17px #000;">9,010.00</span>
<span class="t" style="left:125.98px;top:611px;font-size:20px;color:#fff;transform:scaleX(1.0189);-webkit-text-stroke:0.75px #fff;">File Your</span>
<span class="t" style="left:79.05px;top:637px;font-size:20px;color:#fff;transform:scaleX(1.0475);-webkit-text-stroke:0.75px #fff;">Income Tax Return</span>
<span class="t" style="left:124.87px;top:664px;font-size:17px;color:#a9e7a2;transform:scaleX(1.0334);-webkit-text-stroke:0.6px #a9e7a2;">FY 2024-25</span>
<span class="t" style="left:69.60px;top:700px;font-size:20px;color:#1fe22a;transform:scaleX(1.0977);-webkit-text-stroke:0.8px #1fe22a;">Of your eCommerce</span>
<span class="t" style="left:124.85px;top:723px;font-size:20px;color:#1fe22a;transform:scaleX(1.0530);-webkit-text-stroke:0.8px #1fe22a;">Business</span>
<span class="t" style="left:68.00px;top:763px;font-size:10.5px;color:#111;transform:scaleX(1.0133);-webkit-text-stroke:0.4px #111;">Before 31<sup>st</sup> July 2025 to avoid penalty fees.</span>
<span class="t" style="left:80.90px;top:790px;font-size:10.5px;color:#111;transform:scaleX(1.0278);-webkit-text-stroke:0.4px #111;">Claim refund of your TDS Deductions.</span>
<span class="t" style="left:124.65px;top:841px;font-size:17px;color:#10203a;transform:scaleX(0.9512);-webkit-text-stroke:0.4px #10203a;">Know More</span>
<span class="t" style="left:21.00px;top:89px;font-size:22.6px;color:#1b2875;transform:scaleX(0.9341);font-weight:700;-webkit-text-stroke:0.4px #1b2875;">GST</span>
<span class="t" style="left:20.51px;top:108px;font-size:22px;color:#2f6de1;transform:scaleX(0.9928);font-weight:700;-webkit-text-stroke:0.3px #2f6de1;">ProSe</span>
<span class="t" style="left:96.50px;top:108px;font-size:22px;color:#2f6de1;transform:scaleX(0.9417);font-weight:700;-webkit-text-stroke:0.3px #2f6de1;">e</span>
</div></div></body></html>
